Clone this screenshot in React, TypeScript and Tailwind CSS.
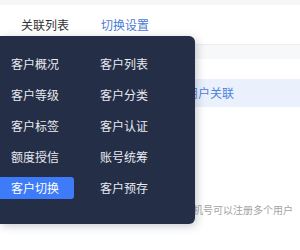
const items = [
  "客户概况",
  "客户列表",
  "客户等级",
  "客户分类",
  "客户标签",
  "客户认证",
  "额度授信",
  "账号统筹",
  "客户切换",
  "客户预存",
];

const App = () => {
  return (
    <div
      className="relative w-[300px] h-[250px] overflow-hidden bg-white"
      style={{ fontFamily: '"Noto Sans CJK SC", "Noto Sans", sans-serif' }}
    >
      {/* TOP STRIP */}
      <div className="h-[5px] bg-[#f5f6f8]" />

      {/* TABS */}
      <div className="h-[40px] flex items-center text-[12px] border-b border-[#ebedf0]">
        <div className="ml-[21px] text-[#333]">关联列表</div>
        <div className="ml-[32px] text-[#4a7bd6]">切换设置</div>
      </div>

      {/* CONTENT */}
      <div className="h-[14px] bg-[#f7f8fa]" />
      <div className="h-[20px]" />
      <div className="h-[28px] bg-[#eaf1fd] flex items-center pl-[186px] text-[12px] text-[#4d7fe0]">
        用户关联
      </div>
      <div className="pt-[95px] pl-[183px] text-[10px] text-[#a3a3a3]">
        手机号可以注册多个用户
      </div>

      {/* MENU */}
      <div className="absolute left-0 top-[36px] w-[195px] h-[188px] bg-[#242e47] rounded-r-md shadow-[2px_2px_8px_rgba(36,46,71,0.25)] pt-[12px]">
        <div className="grid grid-cols-[89px_1fr]">
          {items.map((it) => (
            <div key={it} className="h-[31px] flex items-center">
              <div
                className={
                  it === "客户切换"
                    ? "h-[22px] w-[74px] flex items-center pl-[11px] bg-[#3e7bf9] text-white rounded-r-[3px] text-[12px]"
                    : "h-[22px] flex items-center pl-[11px] text-[#e8eaef] text-[12px]"
                }
              >
                {it}
              </div>
            </div>
          ))}
        </div>
      </div>
    </div>
  );
};

export default App;
